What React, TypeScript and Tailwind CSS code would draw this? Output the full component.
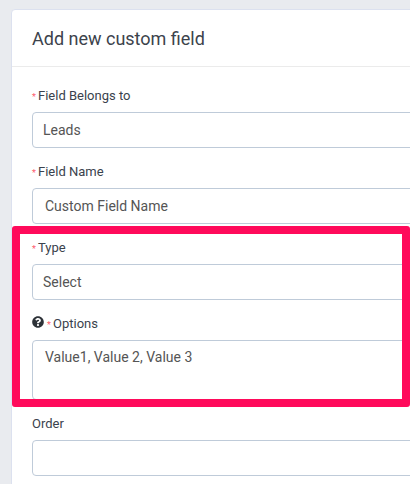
import type { ReactNode } from "react";
import { FaQuestionCircle } from "react-icons/fa";

function Field({ label, required, help, children }: { label: string; required?: boolean; help?: boolean; children: ReactNode }) {
  return (
    <div className="w-[500px]">
      <div className="flex h-6 items-start text-[13px] leading-[16px] text-[#3a424d]">
        {help && <FaQuestionCircle className="mr-[3px] size-[12px] text-[#2d3238]" />}
        {required && <span className="w-[6px] text-[9px] leading-[18px] text-[#fd5c6c]">*</span>}
        <span>{label}</span>
      </div>
      {children}
    </div>
  );
}

const box = "w-full rounded-[4px] border border-[#bfcbd9] bg-white text-[14px] text-[#555555]";

export default function App() {
  return (
    <div className="relative h-[484px] w-[410px] overflow-hidden bg-[#e9ebef] pl-[11px] pt-[9px] font-['Roboto',sans-serif]">
      <div className="h-[520px] w-[540px] rounded-[4px] border border-[#dce1ef] bg-white">
        <h4 className="h-[57px] border-b border-[#ebebeb] pl-5 pt-[17px] text-[18px] leading-6 text-[#3c434c]">Add new custom field</h4>
        <div className="flex flex-col gap-4 pl-5 pt-[21px]">
          <Field label="Field Belongs to" required>
            <div className={box + " h-9 pl-[10px] leading-[34px]"}>Leads</div>
          </Field>
          <Field label="Field Name" required>
            <div className={box + " h-9 pl-3 leading-[34px]"}>Custom Field Name</div>
          </Field>
          <Field label="Type" required>
            <div className={box + " h-9 pl-[10px] leading-[34px]"}>Select</div>
          </Field>
          <Field label="Options" required help>
            <div className={box + " h-[60px] pl-3 pt-[6px] leading-5"}>Value1, Value 2, Value 3</div>
          </Field>
          <Field label="Order">
            <div className={box + " h-9"} />
          </Field>
        </div>
      </div>
      <div className="pointer-events-none absolute left-3 top-[226px] h-[181px] w-[398px] rounded-[3px] border-8 border-[#ff0a5b]" />
    </div>
  );
}
